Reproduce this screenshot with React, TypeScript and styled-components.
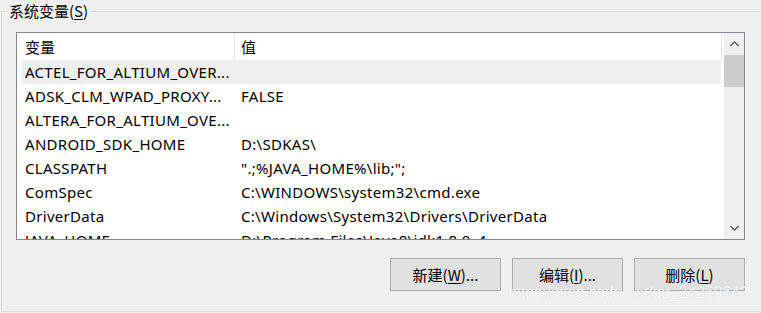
import React from "react";
import styled, { createGlobalStyle } from "styled-components";

const Global = createGlobalStyle`
  html, body { margin: 0; padding: 0; background: #f0f0f0; }
  body {
    width: 761px; height: 313px; overflow: hidden; position: relative;
    font-family: "Noto Sans", "Noto Sans CJK SC", sans-serif;
    font-size: 15px; color: #000;
  }
`;

const GroupBox = styled.div`
  margin: 11px 0 0 1px;
  width: 800px;
  height: 299px;
  border: 1px solid #dcdcdc;
  box-sizing: content-box;
`;

const Legend = styled.div`
  display: block;
  width: max-content;
  margin: -12px 0 0 6px;
  padding: 0 2px 0 1px;
  height: 22px;
  line-height: 22px;
  background: #f0f0f0;
  font-family: "Noto Sans CJK SC", sans-serif;
  font-size: 15px;
`;

const U = styled.span`
  text-decoration: underline;
  text-underline-offset: 2px;
`;

const ListBox = styled.div`
  margin: 10px 0 0 14px;
  width: 727px;
  height: 206px;
  border: 1px solid #828790;
  background: #fff;
  display: flex;
  overflow: hidden;
`;

const ListContent = styled.div`
  flex: 1;
  padding-left: 5px;
  overflow: hidden;
`;

const Table = styled.div`
  width: 699px;
`;

const Row = styled.div<{ $header?: boolean; $selected?: boolean }>`
  display: grid;
  grid-template-columns: 212px 1px 1fr;
  height: ${(p) => (p.$header ? 27 : 24)}px;
  align-items: center;
  background: ${(p) => (p.$selected ? "#efefef" : "#fff")};
  white-space: nowrap;
`;

const Cell = styled.div<{ $pad: number }>`
  padding-left: ${(p) => p.$pad}px;
  overflow: hidden;
  line-height: 24px;
  letter-spacing: 0.3px;
`;

const HeaderCell = styled(Cell)`
  font-family: "Noto Sans CJK SC", sans-serif;
  font-size: 15px;
  line-height: 27px;
  letter-spacing: 0;
`;

const Sep = styled.div<{ $visible?: boolean }>`
  align-self: stretch;
  background: ${(p) => (p.$visible ? "#e5e5e5" : "transparent")};
`;

const HeaderRow = styled(Row)`
  box-shadow: 1px 0 0 #e5e5e5;
`;

const Scrollbar = styled.div`
  width: 20px;
  margin-left: 2px;
  background: #f0f0f0;
  display: flex;
  flex-direction: column;
`;

const Arrow = styled.div`
  height: 22px;
  display: flex;
  align-items: center;
  justify-content: center;
`;

const Thumb = styled.div`
  height: 32px;
  background: #cdcdcd;
`;

const Track = styled.div`
  flex: 1;
`;

const ButtonRow = styled.div`
  display: flex;
  gap: 11px;
  margin: 18px 0 0 388px;
`;

const Button = styled.div`
  width: 109px;
  height: 31px;
  border: 1px solid #adadad;
  background: #e1e1e1;
  display: flex;
  align-items: center;
  justify-content: center;
  font-family: "Noto Sans CJK SC", sans-serif;
  font-size: 15px;
`;

const Watermark = styled.div`
  position: absolute;
  left: 508px;
  top: 284px;
  font-family: "Liberation Sans", Arial, sans-serif;
  font-size: 16px;
  letter-spacing: -0.15px;
  color: rgba(255, 255, 255, 0.85);
  text-shadow: 0 0 1px rgba(0, 0, 0, 0.14);
  white-space: nowrap;
`;

const Chevron = ({ up }: { up?: boolean }) => (
  <svg width="9" height="6" viewBox="0 0 9 6">
    <polyline
      points={up ? "0.5,5 4.5,1 8.5,5" : "0.5,1 4.5,5 8.5,1"}
      fill="none"
      stroke="#606060"
      strokeWidth="1.4"
    />
  </svg>
);

const rows: [string, string][] = [
  ["ACTEL_FOR_ALTIUM_OVER...", ""],
  ["ADSK_CLM_WPAD_PROXY...", "FALSE"],
  ["ALTERA_FOR_ALTIUM_OVE...", ""],
  ["ANDROID_SDK_HOME", "D:\\SDKAS\\"],
  ["CLASSPATH", "\".;%JAVA_HOME%\\lib;\";"],
  ["ComSpec", "C:\\WINDOWS\\system32\\cmd.exe"],
  ["DriverData", "C:\\Windows\\System32\\Drivers\\DriverData"],
  ["JAVA_HOME", "D:\\Program Files\\Java8\\jdk1.8.0_4"],
];

export default function App() {
  return (
    <>
      <Global />
      <GroupBox>
        <Legend>
          系统变量(<U>S</U>)
        </Legend>
        <ListBox>
          <ListContent>
            <Table>
              <HeaderRow $header>
                <HeaderCell $pad={3}>变量</HeaderCell>
                <Sep $visible />
                <HeaderCell $pad={6}>值</HeaderCell>
              </HeaderRow>
              {rows.map(([k, v], i) => (
                <Row key={k} $selected={i === 0}>
                  <Cell $pad={3}>{k}</Cell>
                  <Sep />
                  <Cell $pad={6}>{v}</Cell>
                </Row>
              ))}
            </Table>
          </ListContent>
          <Scrollbar>
            <Arrow>
              <Chevron up />
            </Arrow>
            <Thumb />
            <Track />
            <Arrow>
              <Chevron />
            </Arrow>
          </Scrollbar>
        </ListBox>
        <ButtonRow>
          <Button>
            新建(<U>W</U>)...
          </Button>
          <Button>
            编辑(<U>I</U>)...
          </Button>
          <Button>
            删除(<U>L</U>)
          </Button>
        </ButtonRow>
      </GroupBox>
      <Watermark>https://blog.csdn.net/qq_24269643</Watermark>
    </>
  );
}
